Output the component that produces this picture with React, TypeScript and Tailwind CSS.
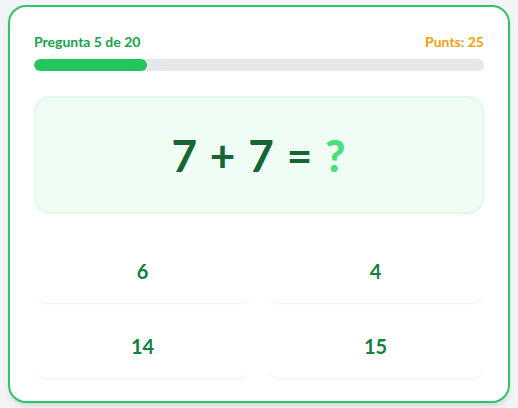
const answers = ["6", "4", "14", "15"];

export default function App() {
  const progress = 25;

  return (
    <div
      className="min-h-screen bg-[#f3f4f6] px-2 py-[5px]"
      style={{ fontFamily: "Lato, 'Noto Sans', sans-serif" }}
    >
      <div className="bg-white border-2 border-[#2fc765] rounded-[18px] shadow-md px-6 pt-[25px] h-[398px]">
        {/* Header */}
        <div className="flex items-center justify-between text-sm font-bold">
          <span className="text-[#16a34a]">Pregunta 5 de 20</span>
          <span className="text-[#f59e0b]">Punts: 25</span>
        </div>

        {/* Progress */}
        <div className="mt-[7px] h-3 w-full rounded-full bg-[#e5e7eb] overflow-hidden">
          <div className="h-full rounded-full bg-[#22c55e]" style={{ width: `${progress}%` }} />
        </div>

        {/* Question */}
        <div className="mt-[25px] h-[118px] rounded-2xl border-2 border-[#dcfce7] bg-[#f0fdf4] flex items-center justify-center">
          <span className="text-[44px] font-bold text-[#166534] tracking-wide">
            7 + 7 = <span className="font-black text-[#4ade80]">?</span>
          </span>
        </div>

        {/* Answers */}
        <div className="mt-6 grid grid-cols-2 gap-x-4 gap-y-[10px]">
          {answers.map((a) => (
            <button
              key={a}
              className="h-[65px] rounded-xl bg-white shadow-[0_2px_2px_-1px_rgba(0,0,0,0.06)] text-xl font-bold text-[#15803d]"
            >
              {a}
            </button>
          ))}
        </div>
      </div>
    </div>
  );
}
